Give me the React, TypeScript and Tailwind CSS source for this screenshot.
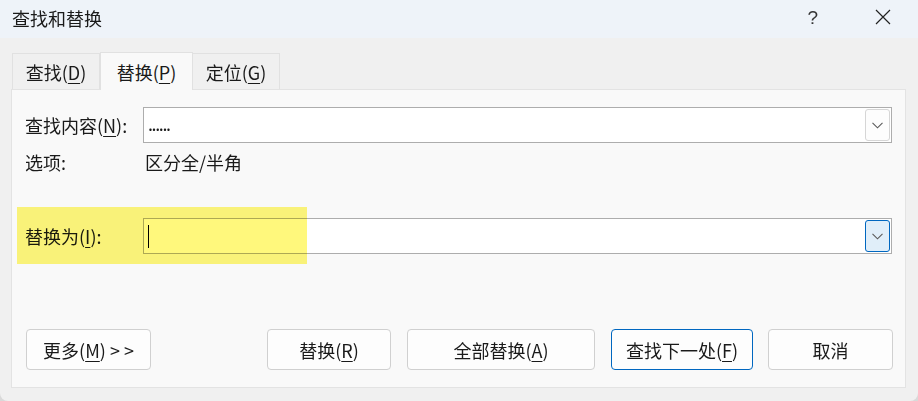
import React from "react";

const font = "font-['Noto_Sans_CJK_SC','Noto_Sans',sans-serif]";

function Key({ children }: { children: React.ReactNode }) {
  return <span className="underline underline-offset-[3px] decoration-1">{children}</span>;
}

function Chevron({ color = "#5a5a5a" }: { color?: string }) {
  return (
    <svg width="11" height="7" viewBox="0 0 11 7" fill="none">
      <path d="M0.5 0.8 L5.5 5.8 L10.5 0.8" stroke={color} strokeWidth="1.1" />
    </svg>
  );
}

function Combo({ focused, children }: { focused?: boolean; children?: React.ReactNode }) {
  return (
    <div className="flex-1 h-[36px] border border-[#adadad] bg-white flex items-center p-[1px]">
      <div className="flex-1 h-full flex items-center pl-[3px] overflow-hidden">{children}</div>
      <div
        className={
          focused
            ? "w-[25px] h-[32px] rounded-[3px] border border-[#0067c0] bg-[#e0eef9] flex items-center justify-center"
            : "w-[25px] h-[32px] rounded-[3px] border border-[#d6d6d6] bg-[#fdfdfd] flex items-center justify-center"
        }
      >
        <Chevron />
      </div>
    </div>
  );
}

function Btn({ w, primary, children }: { w: string; primary?: boolean; children: React.ReactNode }) {
  return (
    <button
      className={`${w} h-[41px] rounded-[4px] border ${
        primary ? "border-[#0067c0]" : "border-[#d0d0d0]"
      } bg-[#fdfdfd] text-[18px] leading-[24px] text-[#1a1a1a] flex items-center justify-center shrink-0`}
    >
      {children}
    </button>
  );
}

export default function App() {
  return (
    <div className={`w-[918px] h-[401px] bg-[#d9d9d9] ${font} text-[#1a1a1a] select-none`}>
      <div className="w-[918px] h-[401px] bg-[#f0f0f0] rounded-b-[8px] overflow-hidden flex flex-col">
        {/* Title bar */}
        <div className="h-[38px] bg-[#eef3f9] flex items-center pl-[12px] shrink-0">
          <span className="text-[18px] leading-[24px] -mt-[3px]">查找和替换</span>
          <span className="ml-auto text-[19px] leading-[24px] font-['Liberation_Sans',sans-serif] text-[#333] -mt-[3px] mr-[57px]">?</span>
          <svg width="16" height="16" viewBox="0 0 16 16" className="mr-[27px] -mt-[4px]">
            <path d="M1 1 L15 15 M15 1 L1 15" stroke="#222" strokeWidth="1.2" />
          </svg>
        </div>

        {/* Tabs */}
        <div className="flex items-end pl-[12px] mt-[14px] h-[37px] shrink-0">
          <div className="w-[88px] h-[36px] bg-[#f0f0f0] border border-b-0 border-[#e1e1e1] flex items-center justify-center text-[18px] leading-[24px]">
            查找(<Key>D</Key>)
          </div>
          <div className="w-[93px] h-[38px] -mb-[1px] bg-[#f9f9f9] border border-b-0 border-[#e1e1e1] flex items-center justify-center text-[18px] leading-[24px] relative z-10">
            替换(<Key>P</Key>)
          </div>
          <div className="w-[87px] h-[36px] bg-[#f0f0f0] border border-b-0 border-l-0 border-[#e1e1e1] flex items-center justify-center text-[18px] leading-[24px]">
            定位(<Key>G</Key>)
          </div>
        </div>

        {/* Panel */}
        <div className="relative ml-[11px] w-[895px] h-[299px] bg-[#f9f9f9] border border-[#e3e3e3] pl-[13px] pr-[13px] pt-[17px] flex flex-col">
          <div className="flex items-center h-[36px]">
            <div className="w-[118px] text-[18px] leading-[24px]">
              查找内容(<Key>N</Key>):
            </div>
            <Combo>
              <span className="text-[18px] leading-[24px] tracking-[-1.4px] -mt-[4px]">......</span>
            </Combo>
          </div>

          <div className="flex items-center h-[24px] mt-[7px] text-[18px] leading-[24px]">
            <div className="w-[120px]">选项:</div>
            <div>区分全/半角</div>
          </div>

          <div className="flex items-center h-[36px] mt-[44px]">
            <div className="w-[118px] text-[18px] leading-[24px]">
              替换为(<Key>I</Key>):
            </div>
            <Combo focused>
              <div className="w-[1px] h-[23px] bg-black" />
            </Combo>
          </div>

          <div className="flex items-center mt-[75px]">
            <div className="ml-[1px]">
              <Btn w="w-[125px]">
                更多(<Key>M</Key>)&nbsp;&gt;&nbsp;&gt;
              </Btn>
            </div>
            <div className="ml-auto -mr-[1px] flex">
              <Btn w="w-[124px]">
                替换(<Key>R</Key>)
              </Btn>
              <div className="w-[16px] shrink-0" />
              <Btn w="w-[188px]">
                全部替换(<Key>A</Key>)
              </Btn>
              <div className="w-[16px] shrink-0" />
              <Btn w="w-[142px]" primary>
                查找下一处(<Key>F</Key>)
              </Btn>
              <div className="w-[15px] shrink-0" />
              <Btn w="w-[125px]">取消</Btn>
            </div>
          </div>

          {/* highlighter mark */}
          <div className="absolute left-[5px] top-[117px] w-[290px] h-[57px] bg-[#fff87c] mix-blend-multiply pointer-events-none" />
        </div>
      </div>
    </div>
  );
}
